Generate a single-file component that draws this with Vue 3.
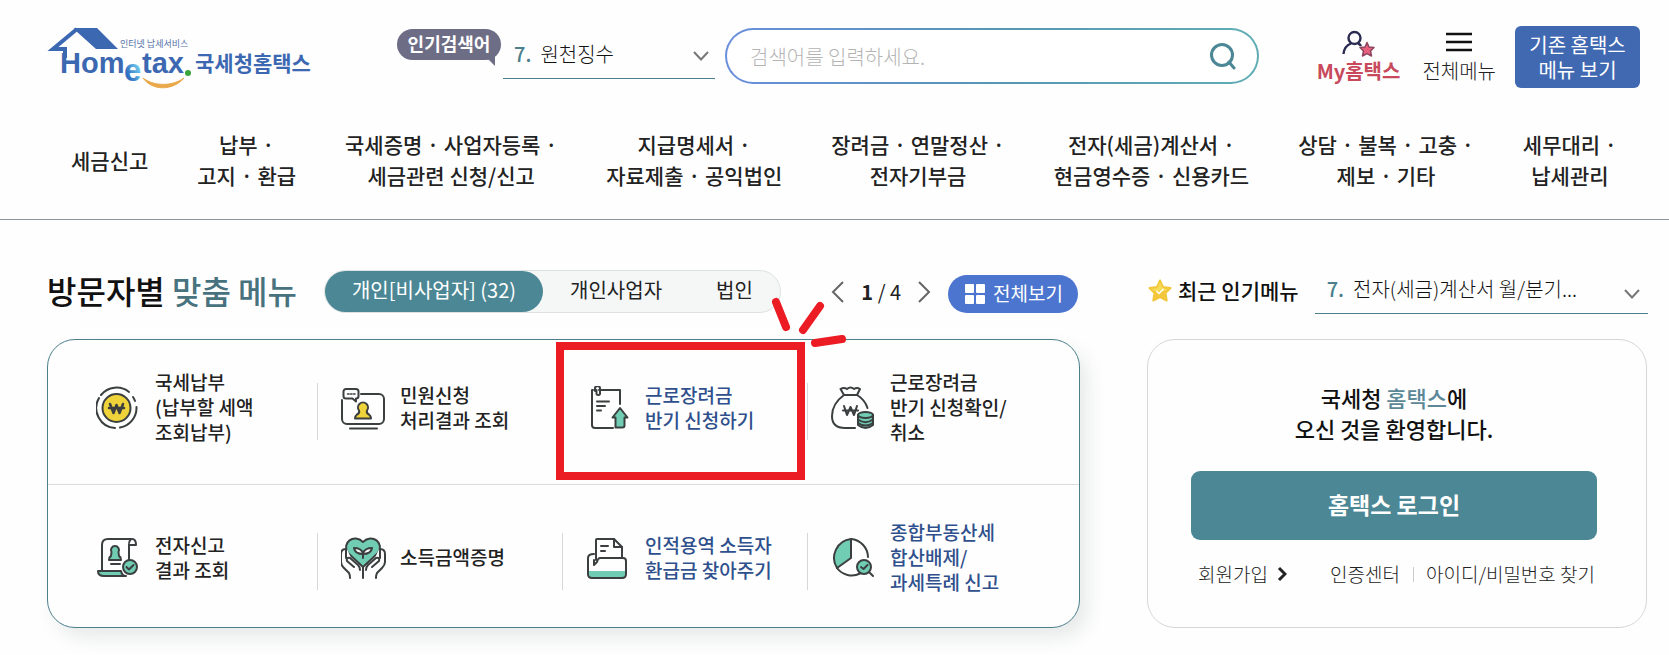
<script setup>
import { ref } from 'vue'

const keyword = ref('')
const activeTab = ref(0)

const navItems = [
  ['세금신고'],
  ['납부 ·', '고지 · 환급'],
  ['국세증명 · 사업자등록 ·', '세금관련 신청/신고'],
  ['지급명세서 ·', '자료제출 · 공익법인'],
  ['장려금 · 연말정산 ·', '전자기부금'],
  ['전자(세금)계산서 ·', '현금영수증 · 신용카드'],
  ['상담 · 불복 · 고충 ·', '제보 · 기타'],
  ['세무대리 ·', '납세관리'],
]

const tabs = ['개인[비사업자] (32)', '개인사업자', '법인']

const menus = [
  { icon: 'coin', lines: ['국세납부', '(납부할 세액', '조회납부)'] },
  { icon: 'monitor', lines: ['민원신청', '처리결과 조회'] },
  { icon: 'apply', lines: ['근로장려금', '반기 신청하기'], blue: true, marked: true },
  { icon: 'bag', lines: ['근로장려금', '반기 신청확인/', '취소'] },
  { icon: 'scroll', lines: ['전자신고', '결과 조회'] },
  { icon: 'heart', lines: ['소득금액증명'] },
  { icon: 'folder', lines: ['인적용역 소득자', '환급금 찾아주기'], blue: true },
  { icon: 'pie', lines: ['종합부동산세', '합산배제/', '과세특례 신고'], blue: true },
]
</script>

<template>
  <div class="page">
    <header class="header">
      <div class="top">
        <a href="#" class="logo" aria-label="국세청홈택스">
          <svg width="264" height="64" viewBox="0 0 264 64">
            <defs>
              <linearGradient id="logoE" x1="0" y1="1" x2="1" y2="0">
                <stop offset="0.3" stop-color="#2f6fc0" />
                <stop offset="0.7" stop-color="#6cc3ea" />
              </linearGradient>
            </defs>
            <path d="M24 2H47L68 23H46L26 5Z" fill="#3c68b2" />
            <path d="M27 3L3 23H15V32" fill="none" stroke="#3c68b2" stroke-width="4" />
            <text x="10" y="47" class="logo-word" fill="#3c68b2">Hom</text>
            <text x="74" y="55" class="logo-e" fill="url(#logoE)">e</text>
            <text x="92" y="47" class="logo-word" fill="#3c68b2">tax</text>
            <circle cx="138" cy="47" r="3" fill="#3ba43a" />
            <path d="M93 52C102 65 123 65 134 52C123 60 105 61 93 52Z" fill="#e9a94b" stroke="#e9a94b" />
            <text x="70" y="21" class="logo-small" fill="#5673a8">인터넷 납세서비스</text>
            <text x="145" y="45" class="logo-ko" fill="#3c68b2">국세청홈택스</text>
          </svg>
        </a>

        <label for="hot" class="badge">인기검색어</label>
        <div class="picker hot">
          <span class="num">7.</span>
          <select id="hot"><option>원천징수</option></select>
          <svg class="chev" width="16" height="10" viewBox="0 0 16 10"><path d="M1 1L8 8.500L15 1" /></svg>
        </div>

        <form class="search" @submit.prevent>
          <input v-model="keyword" type="text" placeholder="검색어를 입력하세요." aria-label="검색어" />
          <button type="submit" aria-label="검색">
            <svg width="28" height="28" viewBox="0 0 28 28" fill="none" stroke="#4c8795" stroke-width="3">
              <circle cx="13" cy="13" r="10.500" />
              <path d="M20 20L25 26" stroke-linecap="round" />
            </svg>
          </button>
        </form>

        <a href="#" class="util my">
          <svg width="34" height="28" viewBox="0 0 34 28" fill="none" stroke="#2a2b50" stroke-width="2.400">
            <circle cx="12.500" cy="8" r="6" />
            <path d="M1.500 24C2 18 5 15 9 13.500M16 13.500C17.500 14 18.500 15 19 16" />
            <path d="M25 12.500L27 17L32 17.500L28.500 21L29.500 26L25 23.700L20.500 26L21.500 21L18 17.500L23 17Z" fill="#e8607c" stroke="#8d4560" stroke-width="1.500" stroke-linejoin="round" />
          </svg>
          <span>My홈택스</span>
        </a>
        <a href="#" class="util all">
          <svg width="26" height="28" viewBox="0 0 26 28" stroke="#111" stroke-width="2.400">
            <path d="M0 4H26M0 12H26M0 20H26" />
          </svg>
          <span>전체메뉴</span>
        </a>
        <button class="old" type="button">기존 홈택스<br />메뉴 보기</button>
      </div>

      <nav class="nav">
        <a v-for="item in navItems" :key="item[0]" href="#">
          <span v-for="line in item" :key="line">{{ line }}</span>
        </a>
      </nav>
    </header>

    <main class="main">
      <section class="left">
        <div class="bar">
          <h2>방문자별 <em>맞춤 메뉴</em></h2>
          <div class="tabs">
            <button
              v-for="(tab, i) in tabs"
              :key="tab"
              type="button"
              :class="{ on: i === activeTab }"
              @click="activeTab = i"
            >{{ tab }}</button>
          </div>
          <div class="pager">
            <button type="button" aria-label="이전">
              <svg width="13" height="24" viewBox="0 0 13 24"><path d="M12 2L2 12L12 22" /></svg>
            </button>
            <span><b>1</b> / 4</span>
            <button type="button" aria-label="다음">
              <svg width="13" height="24" viewBox="0 0 13 24"><path d="M1 2L11 12L1 22" /></svg>
            </button>
          </div>
          <button type="button" class="view-all">
            <svg width="20" height="20" viewBox="0 0 20 20" fill="#fff">
              <rect width="9" height="9" rx="1" /><rect x="11" width="9" height="9" rx="1" />
              <rect y="11" width="9" height="9" rx="1" /><rect x="11" y="11" width="9" height="9" rx="1" />
            </svg>
            <span>전체보기</span>
          </button>
        </div>

        <div class="grid">
          <a v-for="m in menus" :key="m.icon" href="#" class="cell" :class="{ blue: m.blue }">
            <svg class="icon" width="46" height="44" viewBox="0 0 46 44">
              <g v-if="m.icon === 'coin'">
                <path d="M5 9A20 20 0 0 1 33 6M37 11A20 20 0 0 1 39 15M40.500 21A20 20 0 0 1 24 41.500M19 42A20 20 0 0 1 3 12" />
                <circle cx="20.500" cy="22" r="14" fill="#efd33b" />
                <path d="M14 18L17.500 27L20.500 19L23.500 27L27 18M13 22H28" stroke-width="2.500" />
              </g>
              <g v-else-if="m.icon === 'monitor'">
                <path d="M20 8H38A5 5 0 0 1 43 13V33A5 5 0 0 1 38 38H6A5 5 0 0 1 1 33V14M9 42.500H36" />
                <path d="M5 3H15A2.500 2.500 0 0 1 17.500 5.500V10A2.500 2.500 0 0 1 15 12.500V15.500L11.500 12.500H5A2.500 2.500 0 0 1 2.500 10V5.500A2.500 2.500 0 0 1 5 3Z" fill="#fff" />
                <path d="M6.500 8H8M9.500 8H11M12.500 8H14" stroke-width="1.500" />
                <path d="M18 24.500A5 5 0 1 1 26 24.500Q25 27 28 28.500Q30 30 30 32.500H14Q14 30 16 28.500Q19 27 18 24.500Z" fill="#efd33b" />
              </g>
              <g v-else-if="m.icon === 'apply'">
                <path d="M13 4H34V18M7 4H6V39A3 3 0 0 0 9 42H27" />
                <path d="M9 5V2.500A2.500 2.500 0 0 1 14 2.500V8A2 2 0 0 1 10.500 8V4" />
                <path d="M11 15.500H23M11 20H19M11 24.500H15" />
                <path d="M34 22L41.500 31.500H38.500V39.500A2 2 0 0 1 36.500 41.500H29.500V31.500H26.500Z" fill="#70cdb4" />
              </g>
              <g v-else-if="m.icon === 'bag'">
                <path d="M13 9L9.500 3Q13 1 16 3Q19.500 0 23 3Q26 1 29 3L26 9Z" />
                <path d="M13 9C6 14 1 22 1 30C1 39 6 42 14 42H24M26 9C31 12 35 17 36.500 22" />
                <path d="M13 20L16 29L19.500 21L23 29L26 20M12 24.500H27" />
                <path d="M27 29V39Q34.500 45 42 39V29" fill="#70cdb4" />
                <ellipse cx="34.500" cy="29" rx="7.500" ry="3" fill="#70cdb4" />
                <path d="M27 33.500Q34.500 39 42 33.500M27 37Q34.500 42 42 37" />
              </g>
              <g v-else-if="m.icon === 'scroll'">
                <path d="M6 34V9Q6 3 12 3H36Q33 4 33 9V24" />
                <path d="M33 9H40Q40 3 36 3" fill="#fff" />
                <path d="M2 35H25Q26 40 30 40H8Q2 40 2 35Z" fill="#70cdb4" />
                <path d="M15.500 16A4 4 0 1 1 22.500 16L23 20Q25 21 25 24H13Q13 21 15 20ZM15 28H24" fill="#70cdb4" />
                <circle cx="34" cy="31" r="7" fill="#70cdb4" />
                <path d="M30.500 31L33 33.500L37.500 29" />
              </g>
              <g v-else-if="m.icon === 'heart'" transform="translate(-2 0)">
                <path d="M24 31L9 17C2 7 15-3 24 6C33-3 46 7 39 17Z" fill="#70cdb4" />
                <path d="M24 31V42M24 22V17Q22 12 15 12Q16 18 24 18Q32 18 33 12Q26 12 24 17" fill="#fff" />
                <path d="M8 13Q3 12 3 18V27L11 37V42H14L20 40V32L12 22ZM40 13Q45 12 45 18V27L37 37V42H34L28 40V32L36 22Z" fill="#fefefe" stroke="none" />
                <path d="M7 13Q2 13 2 18V26Q2 29 5 32L10 37Q11 39 11 42M15 31L8 25Q7 21 11 22L19 29Q21 31 21 34M41 13Q46 13 46 18V26Q46 29 43 32L38 37Q37 39 37 42M33 31L40 25Q41 21 37 22L29 29Q27 31 27 34" />
                <path d="M7 13V22M41 13V22" />
              </g>
              <g v-else-if="m.icon === 'folder'">
                <path d="M10 24V4Q10 3 11 3H28L36 11V22" fill="#fff" />
                <path d="M28 3V11H36" />
                <path d="M15 10H22M15 15H19" />
                <path d="M3 35H39V38Q39 42 35 42H7Q3 42 3 38Z" fill="#70cdb4" stroke="none" />
                <path d="M8 18Q2 18 2 22V38Q2 42 6 42H36Q40 42 40 38V25Q40 22 37 22H14Q12 22 11 26L8 29V24" />
              </g>
              <g v-else>
                <path d="M20 3V22L6 32A19 19 0 0 1 20 3Z" fill="#70cdb4" />
                <path d="M20 3A18.500 18.500 0 0 1 37 21M6 32A18.500 18.500 0 0 0 29 37.500" />
                <circle cx="33" cy="31" r="7" fill="#70cdb4" />
                <path d="M38 36L42 40M30 31L32.500 33L36.500 29" />
              </g>
            </svg>
            <span class="label"><span v-for="line in m.lines" :key="line">{{ line }}</span></span>
            <span v-if="m.marked" class="mark"></span>
            <svg v-if="m.marked" class="rays" width="76" height="54" viewBox="0 0 76 54">
              <path d="M5 6L15 31M49 10L32 34M44 47L71 43" />
            </svg>
          </a>
        </div>
      </section>

      <aside class="right">
        <div class="bar recent">
          <svg width="24" height="24" viewBox="0 0 24 24">
            <path d="M12 1.500L15 8L22.500 9L17.500 14L18.700 21.500L12 18L5.300 21.500L6.500 14L1.500 9L9 8Z" fill="#f3c63c" stroke="#f3c63c" stroke-width="2" stroke-linejoin="round" />
            <path d="M12 3L14.500 9L20 10L16 12H6L3 10L9.500 9Z" fill="#f5dc58" />
            <path d="M8.500 12L11 14.500L15.500 10" fill="none" stroke="#fff" stroke-width="1.500" />
          </svg>
          <label for="recent">최근 인기메뉴</label>
          <div class="picker">
            <span class="num">7.</span>
            <select id="recent"><option>전자(세금)계산서 월/분기...</option></select>
            <svg class="chev" width="16" height="10" viewBox="0 0 16 10"><path d="M1 1L8 8.500L15 1" /></svg>
          </div>
        </div>
        <div class="login">
          <p>국세청 <em>홈택스</em>에<br />오신 것을 환영합니다.</p>
          <button type="button">홈택스 로그인</button>
          <div class="links">
            <a href="#" class="join">회원가입
              <svg width="10" height="16" viewBox="0 0 10 16"><path d="M2 2L8 8L2 14" fill="none" stroke="#222" stroke-width="3" /></svg>
            </a>
            <a href="#">인증센터</a>
            <a href="#" class="find">아이디/비밀번호 찾기</a>
          </div>
        </div>
      </aside>
    </main>
  </div>
</template>

<style>
body {
  margin: 0;
  background: #fefefe;
}
</style>

<style scoped>
.page {
  font-family: "Noto Sans CJK KR", "Noto Sans", sans-serif;
  color: #222;
  word-break: keep-all;
  white-space: nowrap;
}
.page * {
  box-sizing: border-box;
}
a {
  color: inherit;
  text-decoration: none;
}
button,
input,
select {
  font: inherit;
  color: inherit;
  border: 0;
  background: none;
  padding: 0;
  margin: 0;
}
em {
  font-style: normal;
}
.header {
  border-bottom: 1px solid #8a979c;
}
.top {
  display: flex;
  align-items: flex-start;
  padding: 26px 29px 0 50px;
  height: 112px;
}
.logo {
  flex: none;
  width: 264px;
  margin-right: 83px;
}
.logo svg {
  display: block;
  overflow: visible;
}
.logo-word {
  font: 700 29px "Liberation Sans", sans-serif;
}
.logo-e {
  font: 700 31px "Liberation Sans", sans-serif;
}
.logo-small {
  font-size: 9px;
}
.logo-ko {
  font-size: 21px;
  font-weight: 700;
}
.badge {
  position: relative;
  flex: none;
  width: 104px;
  height: 31px;
  margin-top: 3px;
  border-radius: 16px;
  background: #6d6d86;
  color: #fff;
  font-size: 18px;
  font-weight: 700;
  line-height: 29px;
  text-align: center;
}
.badge::after {
  content: "";
  position: absolute;
  right: 6px;
  bottom: -6px;
  border-top: 12px solid #6d6d86;
  border-left: 12px solid transparent;
}
.picker {
  display: flex;
  align-items: center;
  border-bottom: 1px solid #4b7f8c;
  font-size: 20px;
}
.picker .num {
  color: #4b7f8c;
  font-weight: 500;
}
.picker select {
  flex: 1;
  min-width: 0;
  appearance: none;
  margin-left: 9px;
  font-weight: 300;
  color: #111;
  outline: none;
}
.chev {
  flex: none;
  fill: none;
  stroke: #777;
  stroke-width: 2;
}
.hot {
  flex: none;
  width: 212px;
  height: 53px;
  margin: 0 10px 0 2px;
  padding: 2px 6px 0 11px;
}
.hot .chev {
  margin-top: 6px;
}
.search {
  flex: 1;
  min-width: 0;
  display: flex;
  align-items: center;
  height: 56px;
  margin: 2px 58px 0 0;
  padding: 0 20px 0 23px;
  border: 2px solid transparent;
  border-radius: 28px;
  background: linear-gradient(#fff, #fff) padding-box, linear-gradient(90deg, #6a8fdc, #5596b4 50%, #62adb4) border-box;
}
.search input {
  flex: 1;
  min-width: 0;
  font-size: 20px;
  font-weight: 300;
  outline: none;
}
.search input::placeholder {
  color: #b4b4b4;
}
.search svg {
  display: block;
}
.util {
  flex: none;
  display: flex;
  flex-direction: column;
  align-items: center;
  gap: 1px;
  margin: 4px 22px 0 0;
  font-size: 20px;
  line-height: 24px;
  font-weight: 300;
}
.my {
  font-weight: 700;
  color: #c7495b;
}
.all {
  margin-right: 19px;
}
.old {
  flex: none;
  width: 125px;
  height: 62px;
  border-radius: 6px;
  background: #4069b2;
  color: #fff;
  font-size: 20px;
  line-height: 25px;
}
.nav {
  display: flex;
  justify-content: space-between;
  align-items: center;
  height: 107px;
  padding: 0 52px 11px 71px;
  font-size: 21px;
  font-weight: 500;
  line-height: 31px;
}
.nav a {
  display: flex;
  flex-direction: column;
  align-items: center;
}
.main {
  display: grid;
  grid-template-columns: minmax(0, 1033fr) minmax(0, 500fr);
  column-gap: 67px;
  padding: 49px 22px 27px 47px;
}
.bar {
  display: flex;
  align-items: center;
  height: 45px;
  margin-bottom: 25px;
}
h2 {
  margin: 0 27px 4px 0;
  font-size: 32px;
  font-weight: 500;
  line-height: 40px;
  color: #111;
}
h2 em {
  color: #47727e;
}
.tabs {
  display: flex;
  height: 43px;
  border: 1px solid #dde1e1;
  border-radius: 22px;
  background: #f5f7f7;
  font-size: 20px;
}
.tabs button {
  padding: 0 27px 4px;
  border-radius: 22px;
}
.tabs .on {
  background: #4c8795;
  color: #fff;
}
.pager {
  display: flex;
  align-items: center;
  gap: 17px;
  margin: 0 17px 0 auto;
  font-size: 20px;
}
.pager b {
  font-weight: 700;
}
.pager svg {
  display: block;
  fill: none;
  stroke: #666;
  stroke-width: 2;
}
.view-all {
  display: flex;
  align-items: center;
  gap: 8px;
  height: 38px;
  margin: 5px 2px 0 0;
  padding: 0 15px 0 17px;
  border-radius: 19px;
  background: #4b75ce;
  color: #fff;
  font-size: 19px;
}
.view-all span {
  padding-bottom: 3px;
}
.grid {
  display: grid;
  grid-template-columns: repeat(4, 1fr);
  grid-template-rows: 145px 142px;
  padding: 0 27px 0 24px;
  border: 1px solid #4b7f8c;
  border-radius: 28px;
  background: linear-gradient(#d9dddd, #d9dddd) 0 144px / 100% 1px no-repeat #fefefe;
  box-shadow: 8px 10px 18px rgba(40, 60, 60, 0.1);
}
.cell {
  position: relative;
  display: flex;
  align-items: center;
  gap: 13px;
  padding: 0 0 9px 24px;
  font-size: 19px;
  font-weight: 500;
  line-height: 25px;
}
.cell:nth-child(n + 5) {
  padding: 4px 0 0 24px;
}
.cell:not(:nth-child(4n + 1))::before {
  content: "";
  position: absolute;
  left: 0;
  top: 43px;
  height: 57px;
  border-left: 1px solid #d5d8d8;
}
.cell:nth-child(n + 5)::before {
  top: 48px;
}
.blue {
  color: #2f508c;
}
.icon {
  flex: none;
  fill: none;
  stroke: #3b3f3f;
  stroke-width: 2;
  stroke-linejoin: round;
  stroke-linecap: round;
}
.label {
  display: flex;
  flex-direction: column;
  padding-bottom: 3px;
}
.mark {
  position: absolute;
  inset: 2px 2px 5px -6px;
  border: 8px solid #ec1c24;
}
.rays {
  position: absolute;
  right: -40px;
  top: -44px;
  z-index: 1;
  fill: none;
  stroke: #ec1c24;
  stroke-width: 8;
  stroke-linecap: round;
}
.recent label {
  margin: 0 16px 4px 6px;
  font-size: 21px;
  font-weight: 500;
  color: #111;
}
.recent > svg {
  flex: none;
  margin: 0 0 2px 1px;
}
.recent .picker {
  flex: 1;
  min-width: 0;
  height: 45px;
  margin-right: -1px;
  padding: 0 8px 6px 12px;
}
.recent .chev {
  margin-top: 12px;
}
.login {
  display: flex;
  flex-direction: column;
  height: 289px;
  padding: 42px 49px 0 43px;
  border: 1px solid #d5d7d7;
  border-radius: 28px;
}
.login p {
  margin: 0 0 27px;
  font-size: 22px;
  font-weight: 500;
  line-height: 31px;
  text-align: center;
  color: #111;
}
.login em {
  color: #5b8797;
}
.login button {
  height: 69px;
  padding-bottom: 3px;
  border-radius: 9px;
  background: #4c8795;
  color: #fff;
  font-size: 23px;
  font-weight: 700;
}
.links {
  display: flex;
  align-items: center;
  margin: 20px 2px 0 7px;
  font-size: 19px;
  font-weight: 300;
  line-height: 28px;
}
.join {
  display: flex;
  align-items: center;
  gap: 9px;
  margin-right: auto;
}
.find {
  position: relative;
  margin-left: 26px;
}
.find::before {
  content: "";
  position: absolute;
  left: -13px;
  top: 7px;
  height: 15px;
  border-left: 1px solid #ccc;
}
</style>
